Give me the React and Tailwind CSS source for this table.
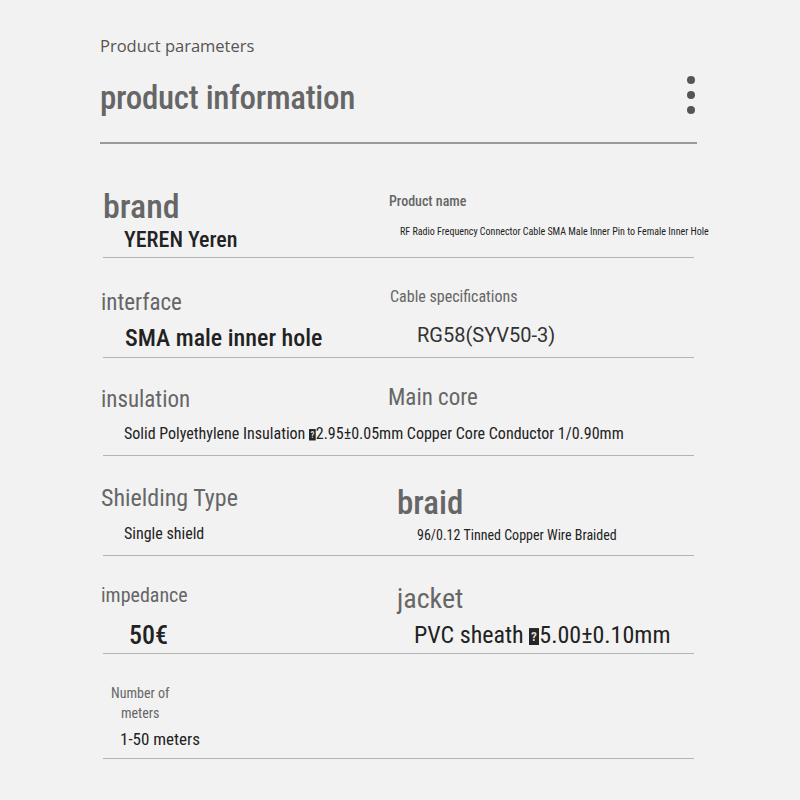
import React from "react";

const cond = "font-['Roboto',sans-serif] font-stretch-condensed";

// missing-glyph box, as in the source image
function Bad() {
  return (
    <svg viewBox="0 0 10 17" className="inline-block h-[0.72em] w-[0.42em]">
      <rect width="10" height="17" fill="#262626" />
      <text x="5" y="13" textAnchor="middle" fontSize="13" fontWeight="700" fill="#d8d8d8">
        ?
      </text>
    </svg>
  );
}

function Rule({ className = "" }) {
  return <div className={"h-px bg-[#b4b4b4] " + className} />;
}

export default function App() {
  return (
    <div className={"h-[800px] w-[800px] bg-[#f2f2f2] " + cond}>
      <div className="pl-[100px] pr-[103px] pt-[36px]">
        {/* header */}
        <div className="flex items-start justify-between">
          <div>
            <p className="font-['Open_Sans',sans-serif] font-stretch-normal text-[16.5px] leading-5 text-[#555]">
              Product parameters
            </p>
            <h1 className="mt-[23px] text-[33px] leading-[38px] font-medium tracking-[-0.3px] text-[#666]">
              product information
            </h1>
          </div>
          <div className="mr-[2px] mt-[40px] flex flex-col gap-[7px]">
            <span className="h-2 w-2 rounded-full bg-[#555]" />
            <span className="h-2 w-2 rounded-full bg-[#555]" />
            <span className="h-2 w-2 rounded-full bg-[#555]" />
          </div>
        </div>
        <div className="mt-[25px] h-[2px] bg-[#9a9a9a]" />
      </div>

      <div className="pl-[101px] pr-[106px]">
        {/* brand */}
        <div className="grid grid-cols-[288px_1fr] pt-[43px]">
          <div>
            <p className="ml-[2px] text-[34px] leading-[38px] font-medium text-[#666]">brand</p>
            <p className="ml-[23px] mt-[1px] text-[22px] leading-7 font-medium text-[#222]">
              YEREN Yeren
            </p>
          </div>
          <div>
            <p className="mt-[4px] text-[14px] leading-5 font-medium text-[#666]">Product name</p>
            <p className="ml-[11px] mt-[13px] whitespace-nowrap text-[10px] leading-4 text-[#222]">
              RF Radio Frequency Connector Cable SMA Male Inner Pin to Female Inner Hole
            </p>
          </div>
        </div>
        <Rule className="ml-[2px] mt-[3px]" />

        {/* interface */}
        <div className="grid grid-cols-[289px_1fr] pt-[31px]">
          <div>
            <p className="text-[23px] leading-7 text-[#666]">interface</p>
            <p className="ml-[24px] mt-[5px] whitespace-nowrap text-[24px] leading-8 font-medium text-[#222]">
              SMA male inner hole
            </p>
          </div>
          <div>
            <p className="mt-[-4px] text-[16px] leading-6 text-[#666]">Cable specifications</p>
            <p className="ml-[27px] mt-[12px] font-stretch-normal text-[20px] leading-7 text-[#333]">
              RG58(SYV50-3)
            </p>
          </div>
        </div>
        <Rule className="ml-[2px] mt-[3px]" />

        {/* insulation */}
        <div className="pt-[28px]">
          <div className="grid grid-cols-[287px_1fr]">
            <p className="text-[23px] leading-7 text-[#666]">insulation</p>
            <p className="mt-[-2px] text-[23px] leading-7 text-[#666]">Main core</p>
          </div>
          <p className="ml-[23px] mt-[10px] whitespace-nowrap text-[16px] leading-5 text-[#222]">
            Solid Polyethylene Insulation <Bad />2.95±0.05mm Copper Core Conductor 1/0.90mm
          </p>
        </div>
        <Rule className="ml-[2px] mt-[11px]" />

        {/* shielding */}
        <div className="grid grid-cols-[296px_1fr] pt-[28px]">
          <div>
            <p className="text-[24px] leading-7 text-[#666]">Shielding Type</p>
            <p className="ml-[23px] mt-[12px] text-[16px] leading-5 text-[#222]">Single shield</p>
          </div>
          <div>
            <p className="mt-[1px] text-[33px] leading-9 font-medium text-[#666]">braid</p>
            <p className="ml-[20px] mt-[4px] whitespace-nowrap text-[14px] leading-5 text-[#222]">
              96/0.12 Tinned Copper Wire Braided
            </p>
          </div>
        </div>
        <Rule className="ml-[2px] mt-[10px]" />

        {/* impedance */}
        <div className="grid grid-cols-[296px_1fr] pt-[27px]">
          <div>
            <p className="text-[20px] leading-6 text-[#666]">impedance</p>
            <p className="ml-[28px] mt-[12px] text-[26px] leading-8 font-medium text-[#222]">50€</p>
          </div>
          <div>
            <p className="text-[28px] leading-8 text-[#666]">jacket</p>
            <p className="ml-[17px] mt-[4px] whitespace-nowrap text-[24px] leading-8 text-[#222]">
              PVC sheath <Bad />5.00±0.10mm
            </p>
          </div>
        </div>
        <Rule className="ml-[2px] mt-[2px]" />

        {/* meters */}
        <div className="pt-[29px]">
          <p className="ml-[10px] text-[14px] leading-5 text-[#666]">Number of</p>
          <p className="ml-[20px] text-[14px] leading-5 text-[#666]">meters</p>
          <p className="ml-[19px] mt-[4px] text-[17px] leading-6 text-[#222]">1-50 meters</p>
        </div>
        <Rule className="ml-[2px] mt-[7px]" />
      </div>
    </div>
  );
}
